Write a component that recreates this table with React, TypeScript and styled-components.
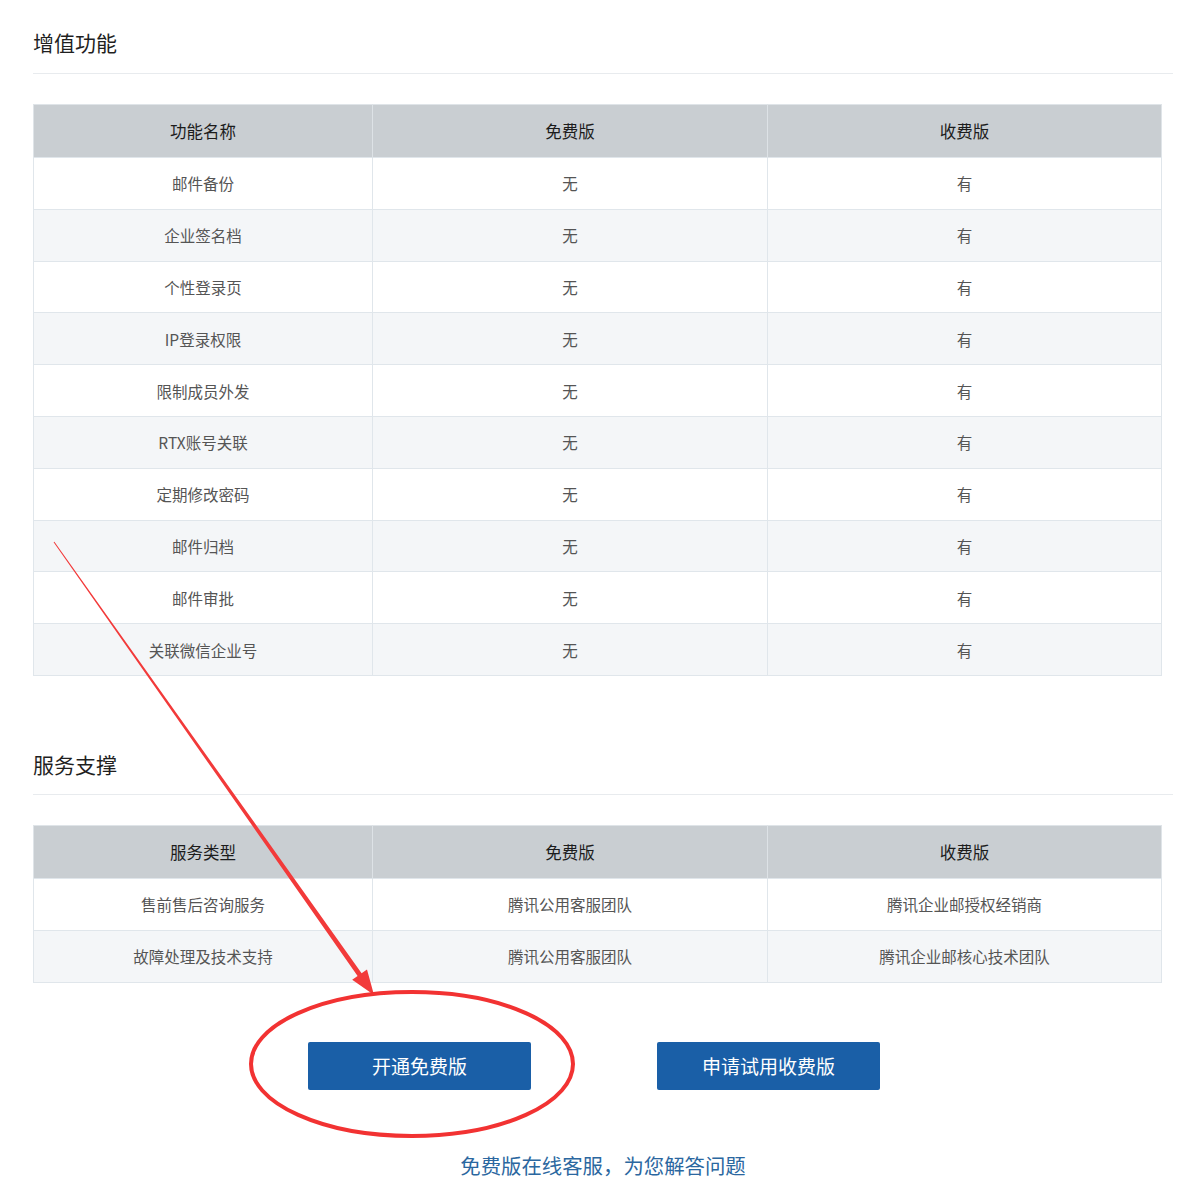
import React from "react";
import styled, { createGlobalStyle } from "styled-components";

const Global = createGlobalStyle`
  html, body { margin: 0; padding: 0; background: #fff; }
  body { font-family: "Noto Sans CJK SC", "Microsoft YaHei", "Noto Sans", sans-serif; }
`;

const Page = styled.div`
  position: relative;
  width: 1200px;
  height: 1199px;
  box-sizing: border-box;
  padding: 0 27px 0 33px;
  overflow: hidden;
`;

const Section = styled.section<{ $top: number }>`
  padding-top: ${(p) => p.$top}px;
`;

const Title = styled.h2<{ $pb: number }>`
  margin: 0;
  font-size: 21px;
  font-weight: 400;
  line-height: 30px;
  color: #1f1f1f;
  padding-bottom: ${(p) => p.$pb}px;
  border-bottom: 1px solid #e8ebee;
`;

const Table = styled.table`
  margin-top: 30px;
  width: 1128px;
  border-collapse: collapse;
  table-layout: fixed;
  border: 1px solid #dfe4e8;
`;

const Th = styled.th`
  height: 52px;
  padding: 0;
  background: #c9ced2;
  border-left: 1px solid #dde2e6;
  font-size: 16.5px;
  font-weight: 400;
  color: #1c1c1c;
  text-align: center;
  &:first-child { border-left: none; }
`;

const Tr = styled.tr<{ $alt: boolean }>`
  background: ${(p) => (p.$alt ? "#f4f6f8" : "#ffffff")};
`;

const Td = styled.td`
  height: 50.8px;
  padding: 0;
  border: 1px solid #e0e6eb;
  font-size: 15.5px;
  color: #555;
  text-align: center;
`;

const Actions = styled.div`
  display: flex;
  gap: 126px;
  margin-top: 59px;
  padding-left: 275px;
`;

const Button = styled.button`
  width: 223px;
  height: 48px;
  border: none;
  border-radius: 2px;
  background: #1a5fa7;
  color: #fff;
  font-family: inherit;
  font-size: 19px;
  cursor: pointer;
`;

const Service = styled.div`
  margin-top: 61px;
  text-align: center;
  font-size: 20.4px;
  line-height: 28px;
  color: #2b67a0;
`;

const Overlay = styled.svg`
  position: absolute;
  left: 0;
  top: 0;
  pointer-events: none;
`;

const features = [
  "邮件备份",
  "企业签名档",
  "个性登录页",
  "IP登录权限",
  "限制成员外发",
  "RTX账号关联",
  "定期修改密码",
  "邮件归档",
  "邮件审批",
  "关联微信企业号",
];

const services: [string, string, string][] = [
  ["售前售后咨询服务", "腾讯公用客服团队", "腾讯企业邮授权经销商"],
  ["故障处理及技术支持", "腾讯公用客服团队", "腾讯企业邮核心技术团队"],
];

const Cols = () => (
  <colgroup>
    <col style={{ width: 339 }} />
    <col style={{ width: 395 }} />
    <col style={{ width: 394 }} />
  </colgroup>
);

export default function App() {
  return (
    <>
      <Global />
      <Page>
        <Section $top={27}>
          <Title $pb={16}>增值功能</Title>
          <Table>
            <Cols />
            <thead>
              <tr>
                <Th>功能名称</Th>
                <Th>免费版</Th>
                <Th>收费版</Th>
              </tr>
            </thead>
            <tbody>
              {features.map((f, i) => (
                <Tr key={f} $alt={i % 2 === 1}>
                  <Td>{f}</Td>
                  <Td>无</Td>
                  <Td>有</Td>
                </Tr>
              ))}
            </tbody>
          </Table>
        </Section>
        <Section $top={73}>
          <Title $pb={15}>服务支撑</Title>
          <Table>
            <Cols />
            <thead>
              <tr>
                <Th>服务类型</Th>
                <Th>免费版</Th>
                <Th>收费版</Th>
              </tr>
            </thead>
            <tbody>
              {services.map((r, i) => (
                <Tr key={r[0]} $alt={i % 2 === 1}>
                  <Td>{r[0]}</Td>
                  <Td>{r[1]}</Td>
                  <Td>{r[2]}</Td>
                </Tr>
              ))}
            </tbody>
          </Table>
        </Section>
        <Actions>
          <Button>开通免费版</Button>
          <Button>申请试用收费版</Button>
        </Actions>
        <Service>免费版在线客服，为您解答问题</Service>
        <Overlay width="1200" height="1199" viewBox="0 0 1200 1199">
          <polygon
            fill="#f23a3a"
            points="53.6,542.3 54.4,541.7 361.6,973.2 367.0,969.4 374,995 352.2,979.8 357.6,976.0"
          />
          <ellipse
            cx="412"
            cy="1064"
            rx="161"
            ry="72"
            fill="none"
            stroke="#f23232"
            strokeWidth="4"
          />
        </Overlay>
      </Page>
    </>
  );
}
